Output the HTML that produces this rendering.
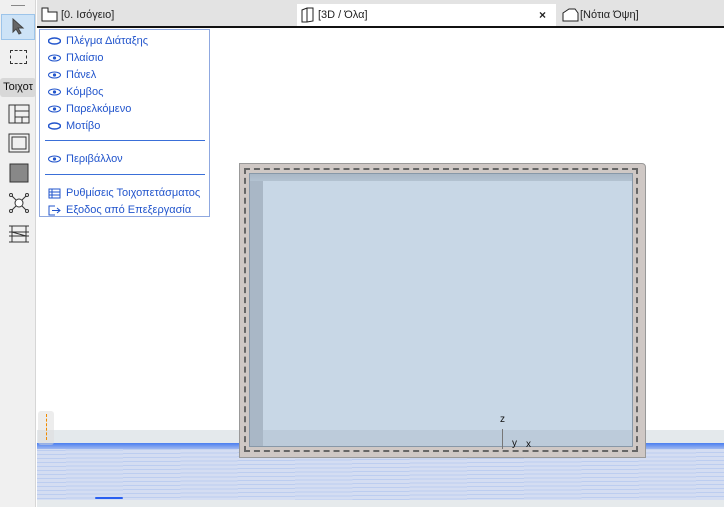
<!DOCTYPE html>
<html><head><meta charset="utf-8"><style>
*{margin:0;padding:0;box-sizing:border-box}
body{width:724px;height:507px;overflow:hidden;background:#fff;font-family:"Liberation Sans","DejaVu Sans",sans-serif;position:relative}
.abs{position:absolute}
#left{left:0;top:0;width:36px;height:507px;background:#f0f0f0;border-right:1px solid #d6d6d6}
#tabs{left:37px;top:0;width:687px;height:28px;background:#e3e3e3;border-bottom:2px solid #111}
.tab{top:4px;height:22px;font-size:11px;color:#222;display:flex;align-items:center}
#menu{left:39px;top:29px;width:171px;height:188px;background:#fff;border:1px solid #8fa8e0}
.mi{position:absolute;left:8px;font-size:11px;color:#2255cc;display:flex;align-items:center;height:16px}
.mi svg{margin-right:5px}
.sep{position:absolute;left:5px;width:160px;height:1px;background:#3a6fd8}
</style></head><body>
<div id="left" class="abs">
 <div class="abs" style="left:11px;top:5px;width:14px;height:1px;background:#888"></div>
 <div class="abs" style="left:1px;top:14px;width:34px;height:26px;background:#cde3f7;border:1px solid #9cc4ea"></div>
 <svg class="abs" style="left:12px;top:18px" width="14" height="18"><path d="M1 1 L1 14 L4 11 L7 16 L9 15 L6 10 L11 10 Z" fill="#666" stroke="#444"/></svg>
 <div class="abs" style="left:10px;top:50px;width:17px;height:14px;border:1px dashed #333"></div>
 <div class="abs" style="left:0;top:78px;width:36px;height:19px;background:#d8d8d8;border-radius:3px;font-size:11px;line-height:19px;text-align:center;color:#111">Τοιχοτ</div>
 <svg class="abs" style="left:8px;top:104px" width="22" height="20"><rect x="1" y="1" width="20" height="18" fill="none" stroke="#333"/><path d="M7 1V19M7 7H21M7 13H21M14 13V19" stroke="#333" fill="none"/></svg>
 <svg class="abs" style="left:8px;top:133px" width="22" height="20"><rect x="1" y="1" width="20" height="18" fill="none" stroke="#333"/><rect x="4" y="4" width="14" height="12" fill="none" stroke="#333"/></svg>
 <svg class="abs" style="left:8px;top:163px" width="22" height="20"><rect x="2" y="1" width="18" height="18" fill="#888" stroke="#333"/></svg>
 <svg class="abs" style="left:8px;top:192px" width="22" height="22"><path d="M2 2L20 20M20 2L2 20" stroke="#333"/><circle cx="11" cy="11" r="4" fill="#fff" stroke="#333"/><circle cx="3" cy="3" r="1.5" fill="#fff" stroke="#333"/><circle cx="19" cy="3" r="1.5" fill="#fff" stroke="#333"/><circle cx="3" cy="19" r="1.5" fill="#fff" stroke="#333"/><circle cx="19" cy="19" r="1.5" fill="#fff" stroke="#333"/></svg>
 <svg class="abs" style="left:8px;top:224px" width="22" height="20"><path d="M1 2H21M1 8H21M1 12H21M1 18H21M4 2V18M18 2V18M4 8L18 12" stroke="#333" fill="none"/></svg>
</div>
<div id="tabs" class="abs">
 <div class="tab abs" style="left:4px"><svg width="18" height="16" style="margin-right:2px"><path d="M1 1H7V5H16V14H1Z" fill="#fff" stroke="#222"/></svg>[0. Ισόγειο]</div>
 <div class="abs" style="left:260px;top:4px;width:259px;height:22px;background:#fff"></div>
 <div class="tab abs" style="left:263px"><svg width="16" height="16" style="margin-right:2px"><path d="M2 3L7 1H13V14L7 15H2Z M7 1V15" fill="none" stroke="#222"/></svg>[3D / Όλα]</div>
 <div class="tab abs" style="left:502px;font-size:12px;font-weight:bold">×</div>
 <div class="tab abs" style="left:524px"><svg width="18" height="16" style="margin-right:1px"><path d="M2 6L8 2H14L17 6V14H2Z" fill="#fff" stroke="#222"/></svg>[Νότια Όψη]</div>
</div>
<div id="menu" class="abs">
 <div class="mi" style="top:3px"><svg width="13" height="8"><ellipse cx="6.5" cy="4" rx="6" ry="3" fill="none" stroke="#2255cc" stroke-width="1.5"/></svg>Πλέγμα Διάταξης</div>
 <div class="mi" style="top:20px"><svg width="13" height="8"><ellipse cx="6.5" cy="4" rx="6" ry="3" fill="none" stroke="#2255cc"/><circle cx="6.5" cy="4" r="1.6" fill="#2255cc"/></svg>Πλαίσιο</div>
 <div class="mi" style="top:37px"><svg width="13" height="8"><ellipse cx="6.5" cy="4" rx="6" ry="3" fill="none" stroke="#2255cc"/><circle cx="6.5" cy="4" r="1.6" fill="#2255cc"/></svg>Πάνελ</div>
 <div class="mi" style="top:54px"><svg width="13" height="8"><ellipse cx="6.5" cy="4" rx="6" ry="3" fill="none" stroke="#2255cc"/><circle cx="6.5" cy="4" r="1.6" fill="#2255cc"/></svg>Κόμβος</div>
 <div class="mi" style="top:71px"><svg width="13" height="8"><ellipse cx="6.5" cy="4" rx="6" ry="3" fill="none" stroke="#2255cc"/><circle cx="6.5" cy="4" r="1.6" fill="#2255cc"/></svg>Παρελκόμενο</div>
 <div class="mi" style="top:88px"><svg width="13" height="8"><ellipse cx="6.5" cy="4" rx="6" ry="3" fill="none" stroke="#2255cc" stroke-width="1.5"/></svg>Μοτίβο</div>
 <div class="sep" style="top:110px"></div>
 <div class="mi" style="top:121px"><svg width="13" height="8"><ellipse cx="6.5" cy="4" rx="6" ry="3" fill="none" stroke="#2255cc"/><circle cx="6.5" cy="4" r="1.6" fill="#2255cc"/></svg>Περιβάλλον</div>
 <div class="sep" style="top:144px"></div>
 <div class="mi" style="top:155px"><svg width="13" height="11"><path d="M1 1H12V10H1ZM4 1V10M1 4H12M1 7H12" fill="none" stroke="#2255cc"/></svg>Ρυθμίσεις Τοιχοπετάσματος</div>
 <div class="mi" style="top:172px"><svg width="13" height="11"><path d="M7 1H1V10H7M4 5.5H12M9 3L12 5.5L9 8" fill="none" stroke="#2255cc"/></svg>Εξοδος από Επεξεργασία</div>
</div>
<!-- ground -->
<div class="abs" style="left:37px;top:430px;width:687px;height:14px;background:#e4e9ec"></div>
<div class="abs" style="left:37px;top:443px;width:687px;height:58px;background:repeating-linear-gradient(179.5deg,#d4ddf2 0 3px,#bccdf0 3px 4px),#d0daf0"></div>
<div class="abs" style="left:37px;top:443px;width:687px;height:6px;background:linear-gradient(#4a7ef0,#9fb8f0)"></div>
<div class="abs" style="left:37px;top:500px;width:687px;height:7px;background:#e6eaec"></div>
<div class="abs" style="left:95px;top:497px;width:28px;height:2px;background:#2a5ff0;border-radius:1px"></div>
<div class="abs" style="left:38px;top:411px;width:16px;height:34px;background:rgba(220,220,220,.5);border-radius:3px"></div>
<div class="abs" style="left:46px;top:414px;width:0;height:26px;border-left:1px dashed #f08a00"></div>
<!-- wall -->
<div class="abs" style="left:239px;top:163px;width:407px;height:295px;background:#cfc8c5;border:1px solid #999;border-radius:0 4px 0 0"></div>
<div class="abs" style="left:244px;top:168px;width:394px;height:284px;border:2px dashed #666"></div>
<div class="abs" style="left:249px;top:173px;width:384px;height:274px;background:#c8d7e6;border:1px solid #8898a8"></div>
<div class="abs" style="left:250px;top:174px;width:13px;height:272px;background:#a9b7c6"></div>
<div class="abs" style="left:250px;top:174px;width:382px;height:7px;background:linear-gradient(#a9b7c6,#b3c2d1)"></div>
<div class="abs" style="left:263px;top:430px;width:369px;height:16px;background:#bccbda"></div>
<div class="abs" style="left:502px;top:429px;width:1px;height:20px;background:#777"></div>
<div class="abs" style="left:500px;top:414px;font-size:10px;color:#111">z</div>
<div class="abs" style="left:512px;top:438px;font-size:10px;color:#111">y</div>
<div class="abs" style="left:526px;top:439px;font-size:10px;color:#111">x</div>
</body></html>
